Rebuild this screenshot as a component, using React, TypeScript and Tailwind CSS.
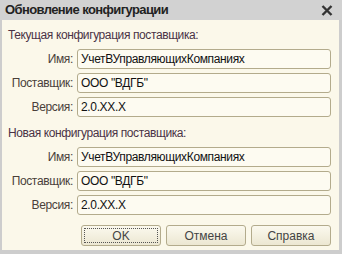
import React from "react";

const font = "font-['Liberation_Sans',Arial,sans-serif]";

const Field = ({ label, value }: { label: string; value: string }) => (
  <div className="flex items-center h-[20px]">
    <div className="w-[75px] pr-[4px] text-right text-[12px] tracking-[-0.35px] text-[#4a3f3a]">{label}</div>
    <div className="flex-1 h-[20px] flex items-center px-[3px] rounded-[3px] border border-[#b3ab8c] bg-[#fdfbf1] text-[12px] tracking-[-0.35px] text-[#111]">
      {value}
    </div>
  </div>
);

const Section = ({ title }: { title: string }) => (
  <>
    <div className="text-[12px] leading-[14px] tracking-[-0.4px] text-[#4a3346] pl-[6px]">{title}</div>
    <div className="flex flex-col gap-[4px] mt-[7px]">
      <Field label="Имя:" value="УчетВУправляющихКомпаниях" />
      <Field label="Поставщик:" value={'ООО "ВДГБ"'} />
      <Field label="Версия:" value="2.0.XX.X" />
    </div>
  </>
);

const Btn = ({ children, focus }: { children: React.ReactNode; focus?: boolean }) => (
  <button className="w-[80px] h-[21px] p-[2px] rounded-[3px] border border-[#b3ab8c] bg-linear-to-b from-[#fbf9ee] to-[#ece7d2] text-[12px] text-[#444]">
    <div className={`h-full flex items-center justify-center ${focus ? "border border-dotted border-[#555]" : ""}`}>
      {children}
    </div>
  </button>
);

export default function App() {
  return (
    <div className={`w-[342px] h-[254px] flex flex-col bg-[#cdcdcd] ${font}`}>
      <div className="h-[20px] flex items-center justify-between pl-[5px] pr-[9px] bg-[#d2d2d2]">
        <span className="text-[13px] font-bold tracking-[-0.6px] text-[#222]">Обновление конфигурации</span>
        <svg width="12" height="11" viewBox="0 0 12 11">
          <path d="M1.5 1 L10.5 10 M10.5 1 L1.5 10" stroke="#333" strokeWidth="2.4" />
        </svg>
      </div>
      <div className="flex-1 ml-[2px] mr-[3px] mb-[4px] bg-[#fbf8ea] pt-[8px] pr-[8px] flex flex-col">
        <Section title="Текущая конфигурация поставщика:" />
        <div className="mt-[9px]">
          <Section title="Новая конфигурация поставщика:" />
        </div>
        <div className="flex justify-end gap-[5px] mt-[10px]">
          <Btn focus>OK</Btn>
          <Btn>Отмена</Btn>
          <Btn>Справка</Btn>
        </div>
      </div>
    </div>
  );
}
